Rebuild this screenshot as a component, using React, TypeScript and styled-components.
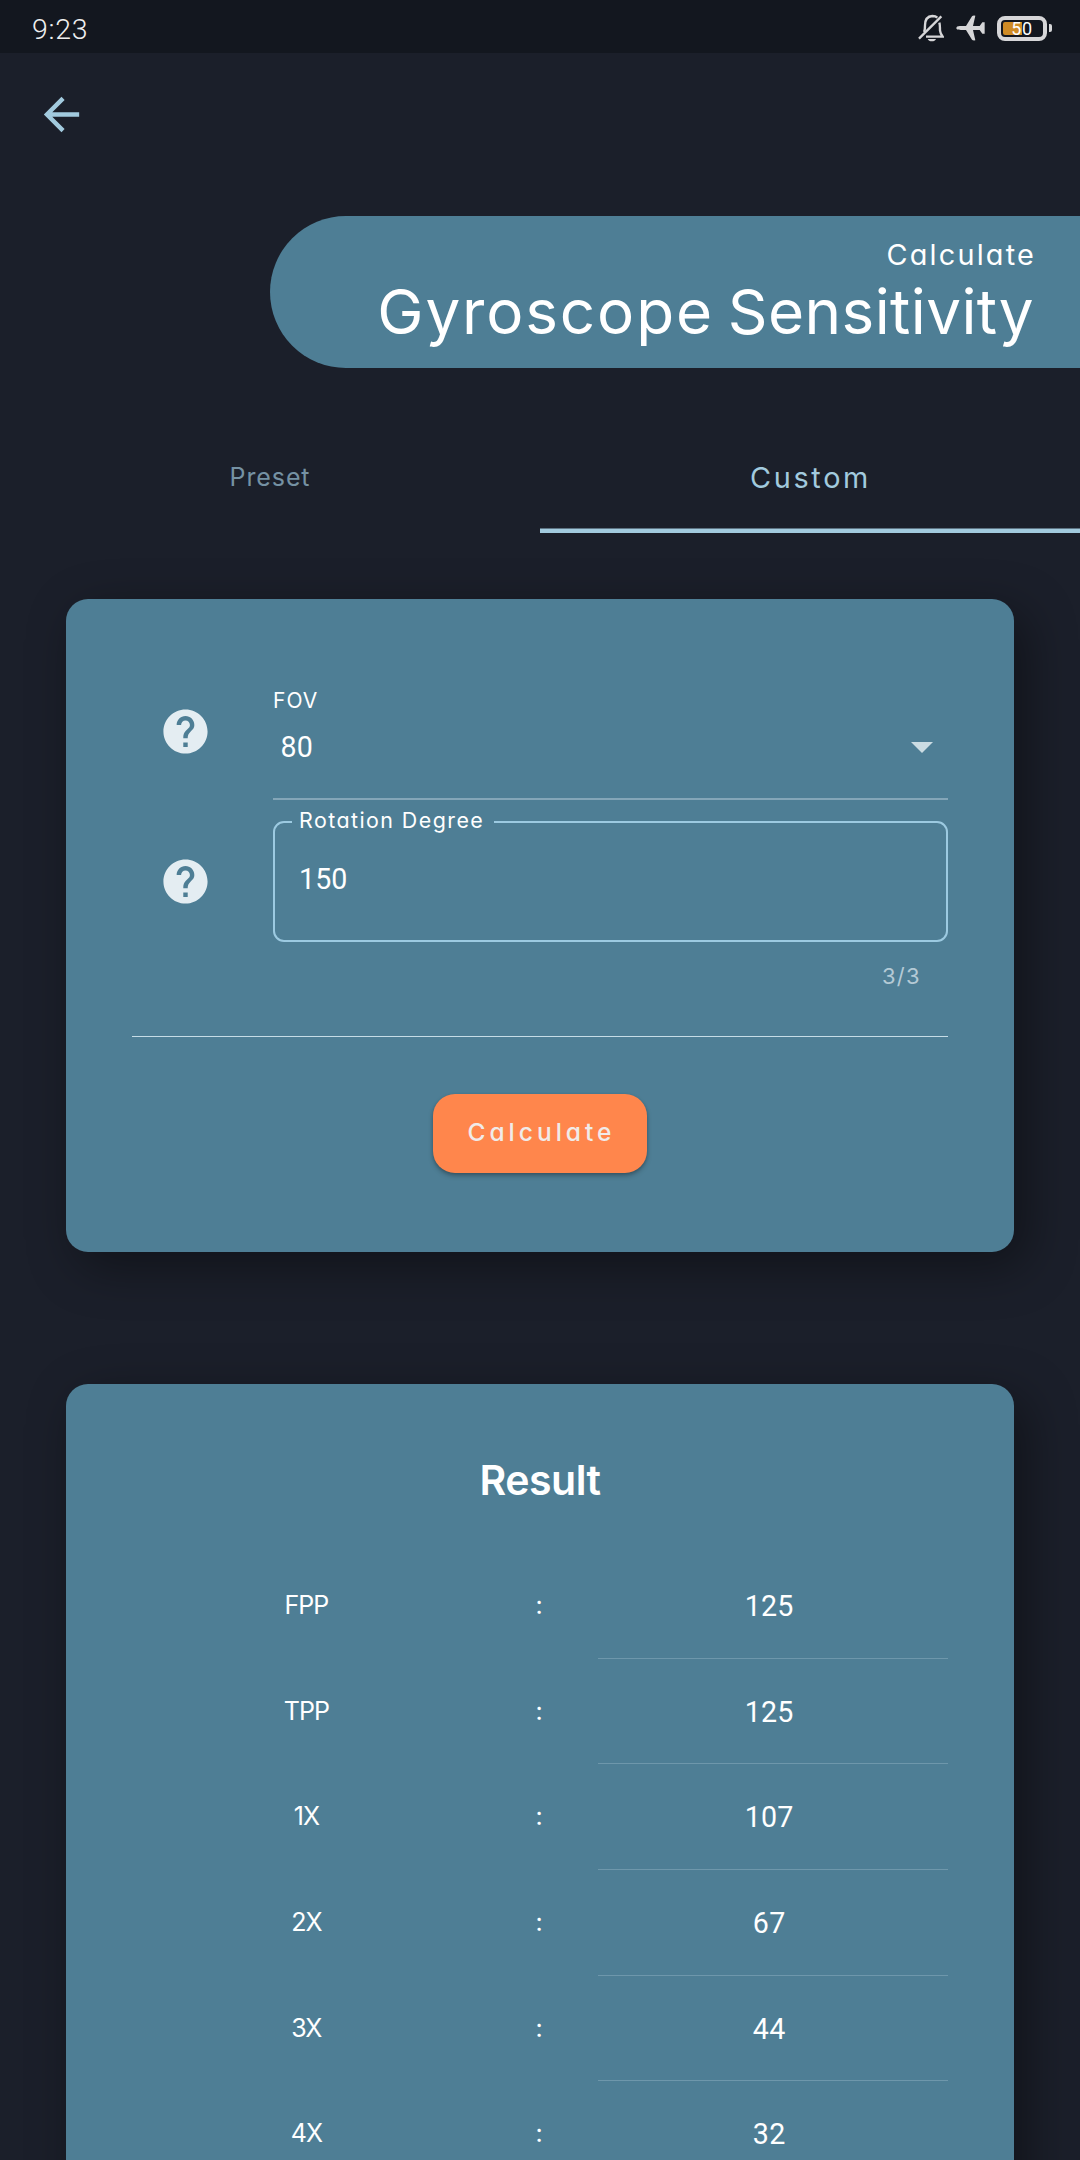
import React from 'react';
import styled, { createGlobalStyle, css } from 'styled-components';

const colors = {
  page: '#1b1f2a',
  status: '#13171f',
  surface: '#4e7e95',
  accent: '#a2cade',
  orange: '#ff864c',
};

const GlobalStyle = createGlobalStyle`
  *, *::before, *::after { box-sizing: border-box; }
  html, body { margin: 0; padding: 0; background: ${colors.page}; }
  body { height: 2160px; overflow: hidden; }
`;

const geometric = css`
  font-family: Inter, 'Open Sans', sans-serif;
  font-feature-settings: 'cv11' 1, 'calt' 0;
`;

const numeric = css`
  font-family: Roboto, 'Noto Sans', sans-serif;
`;

const Screen = styled.div`
  width: 1080px;
  height: 2160px;
  overflow: hidden;
  display: flex;
  flex-direction: column;
  background: ${colors.page};
  color: #fff;
  ${geometric}
`;

const StatusBar = styled.header`
  flex: none;
  height: 53px;
  padding: 3px 28px 0 32px;
  display: flex;
  align-items: center;
  justify-content: space-between;
  background: ${colors.status};
  color: #efefef;
`;

const Clock = styled.span`
  ${numeric}
  font-size: 28.5px;
  font-weight: 300;
  line-height: 50px;
  letter-spacing: 0.7px;
  padding-top: 3px;
`;

const StatusIcons = styled.div`
  display: flex;
  align-items: center;
  gap: 12px;
  height: 50px;
`;

const Battery = styled.div`
  display: flex;
  align-items: center;
  gap: 2px;

  &::after {
    content: '';
    width: 3px;
    height: 8px;
    border-radius: 0 2px 2px 0;
    background: #d6d6d8;
  }
`;

const BatteryShell = styled.div`
  width: 50px;
  height: 25px;
  padding: 2px;
  border: 4px solid #d6d6d8;
  border-radius: 8px;
`;

const BatteryLevel = styled.div`
  ${numeric}
  height: 13px;
  border-radius: 2px;
  background: linear-gradient(90deg, #cf8b25 50%, transparent 50%);
  color: #fff;
  font-size: 18px;
  line-height: 13px;
  letter-spacing: 0.6px;
  text-align: center;
`;

const AppBar = styled.nav`
  flex: none;
  height: 163px;
  padding: 35px 0 0 35px;
`;

const BackButton = styled.button`
  display: block;
  width: 53px;
  height: 53px;
  padding: 0;
  border: 0;
  background: none;
  color: ${colors.accent};
`;

const Banner = styled.section`
  flex: none;
  align-self: flex-end;
  width: 810px;
  height: 151.5px;
  padding: 21px 46px 0 0;
  border-radius: 76px 0 0 76px;
  background: ${colors.surface};
  text-align: right;
`;

const Overline = styled.div`
  font-size: 28.8px;
  line-height: 36px;
  letter-spacing: 2.2px;
  margin-right: -2px;
`;

const Title = styled.h1`
  margin: 0;
  font-size: 62px;
  font-weight: 400;
  line-height: 78px;
  letter-spacing: 0.4px;
  word-spacing: -4px;
  white-space: nowrap;
`;

const LooseWord = styled.span`
  letter-spacing: 1.85px;
`;

const Tabs = styled.div`
  flex: none;
  margin-top: 54px;
  height: 111.3px;
  display: grid;
  grid-template-columns: 1fr 1fr;
`;

const Tab = styled.button<{ $active?: boolean }>`
  ${geometric}
  border: 0;
  padding: ${(p) => (p.$active ? '1px 0 0 1px' : '0')};
  background: none;
  color: ${(p) => (p.$active ? colors.accent : '#7591a3')};
  font-size: ${(p) => (p.$active ? 28.8 : 25)}px;
  letter-spacing: ${(p) => (p.$active ? 2.7 : 0.9)}px;
  box-shadow: ${(p) => (p.$active ? `inset 0 -4.5px 0 ${colors.accent}` : 'none')};
`;

const Card = styled.section`
  flex: none;
  margin: 66px 66px 0;
  padding: 66px;
  border-radius: 22px;
  background: ${colors.surface};
  box-shadow: 12px 14px 50px rgba(0, 0, 0, 0.4);
`;

const FormCard = styled(Card)`
  height: 653.5px;
`;

const ResultCard = styled(Card)`
  margin-top: 132px;
  height: 900px;
`;

const FieldRow = styled.div<{ $gap?: number }>`
  display: grid;
  grid-template-columns: 106px 675px;
  justify-content: space-between;
  align-items: center;
  margin-top: ${(p) => p.$gap ?? 0}px;
`;

const HelpButton = styled.button<{ $lift?: number }>`
  display: flex;
  justify-content: center;
  padding: 0 0 ${(p) => p.$lift ?? 0}px 0;
  border: 0;
  background: none;
  color: #e4edf2;
`;

const SelectField = styled.div`
  height: 135px;
  padding-top: 22px;
  border-bottom: 2px solid #84a6b8;
`;

const FieldLabel = styled.div`
  font-size: 21px;
  line-height: 28px;
  letter-spacing: 1px;
`;

const SelectValue = styled.div`
  ${numeric}
  display: flex;
  align-items: center;
  justify-content: space-between;
  height: 64px;
  padding: 0 15px 0 7.5px;
  font-size: 28.6px;
  letter-spacing: 0.2px;

  svg {
    margin-top: 1px;
  }
`;

const OutlinedField = styled.div`
  ${numeric}
  position: relative;
  height: 121px;
  padding-left: 24px;
  border: 2px solid #9ccae1;
  border-radius: 11px;
  font-size: 28.6px;
  letter-spacing: 0.1px;
  line-height: 113px;
`;

const FloatingLabel = styled.span`
  ${geometric}
  position: absolute;
  left: 17px;
  top: -17px;
  width: 202px;
  padding-left: 7px;
  background: ${colors.surface};
  font-size: 21.4px;
  letter-spacing: 1.45px;
  line-height: 28px;
  white-space: nowrap;
`;

const Counter = styled.div`
  padding: 20px 27px 0 0;
  font-size: 22px;
  line-height: 28px;
  letter-spacing: 1.3px;
  text-align: right;
  color: #b4cad5;
`;

const Divider = styled.hr`
  margin: 46px 0 0;
  border: 0;
  height: 1px;
  background: #c6dce6;
`;

const CalculateButton = styled.button`
  ${geometric}
  display: block;
  width: 214px;
  height: 79px;
  margin: 57px auto 0;
  padding: 0 0 2px 3px;
  border: 0;
  border-radius: 22px;
  background: ${colors.orange};
  color: #f0ebe9;
  font-size: 24.5px;
  font-weight: 500;
  letter-spacing: 4px;
  box-shadow: 0 3px 5px rgba(0, 0, 0, 0.25), 0 1px 3px rgba(0, 0, 0, 0.15);
`;

const ResultTitle = styled.h2`
  margin: 0;
  font-size: 41px;
  font-weight: 600;
  line-height: 60px;
  letter-spacing: -0.5px;
  text-align: center;
`;

const ResultList = styled.div`
  margin-top: 42px;
`;

const ResultRow = styled.div`
  display: grid;
  grid-template-columns: 3fr 1fr 3fr;
  height: 105.6px;
  text-align: center;
  font-size: 25px;
  line-height: 106px;
`;

const Scope = styled.span`
  padding-right: 1px;
  letter-spacing: -1px;
`;

const Separator = styled.span`
  padding-right: 2px;
`;

const ResultValue = styled.span`
  ${numeric}
  height: 106.6px;
  border-bottom: 1px solid #6e97ab;
  padding-right: 8px;
  font-size: 28.6px;
  letter-spacing: 0.2px;
  line-height: 108px;
`;

const rows = [
  { scope: 'FPP', value: 125 },
  { scope: 'TPP', value: 125 },
  { scope: '1X', value: 107 },
  { scope: '2X', value: 67 },
  { scope: '3X', value: 44 },
  { scope: '4X', value: 32 },
];

const MutedBell = () => (
  <svg width="26" height="28" viewBox="0 0 78 84" fill="none" stroke="#d6d6d8" strokeWidth="7">
    <path d="M18 54 C21 49 21 44 21 34 C21 17 28 7 43 6 C50 6 55 8 58 11" />
    <path d="M64 26 C66 32 66 40 66 50 C67 58 70 62 74 68 L24 68" />
    <path d="M3 74 L70 7" />
    <path d="M29 75 H54 C52 80 48 82 41.500 82 C35 82 31 80 29 75 Z" fill="#d6d6d8" stroke="none" />
  </svg>
);

const Airplane = () => (
  <svg width="29" height="26" viewBox="0 0 87 78" fill="#d6d6d8">
    <path d="M3 35 C6 33 12 33 30 33 L48 4 Q50 1 58 2 L51 33 L71 33 L79 22 H86 V56 H79 L71 45 L51 45 L58 76 Q50 77 48 74 L30 45 C12 45 6 45 3 43 Q-1 39 3 35 Z" />
  </svg>
);

const HelpIcon = () => (
  <svg width="53" height="53" viewBox="0 0 24 24" fill="currentColor">
    <path d="M12 2C6.480 2 2 6.480 2 12s4.480 10 10 10 10-4.480 10-10S17.520 2 12 2zm1 17h-2v-2h2v2zm2.070-7.750l-.9.920C13.450 12.900 13 13.500 13 15h-2v-.5c0-1.100.450-2.100 1.170-2.830l1.240-1.260c.370-.360.590-.860.590-1.410 0-1.100-.9-2-2-2s-2 .9-2 2H8c0-2.210 1.790-4 4-4s4 1.790 4 4c0 .880-.360 1.680-.930 2.250z" />
  </svg>
);

export default function App() {
  return (
    <Screen>
      <GlobalStyle />
      <StatusBar>
        <Clock>9:23</Clock>
        <StatusIcons>
          <MutedBell />
          <Airplane />
          <Battery>
            <BatteryShell>
              <BatteryLevel>50</BatteryLevel>
            </BatteryShell>
          </Battery>
        </StatusIcons>
      </StatusBar>
      <AppBar>
        <BackButton aria-label="Back">
          <svg width="53" height="53" viewBox="0 0 24 24" fill="currentColor">
            <path d="M20 11H7.830l5.590-5.590L12 4l-8 8 8 8 1.410-1.410L7.830 13H20v-2z" />
          </svg>
        </BackButton>
      </AppBar>
      <Banner>
        <Overline>Calculate</Overline>
        <Title>
          <LooseWord>Gyroscope</LooseWord> Sensitivity
        </Title>
      </Banner>
      <Tabs>
        <Tab>Preset</Tab>
        <Tab $active>Custom</Tab>
      </Tabs>
      <FormCard>
        <FieldRow>
          <HelpButton aria-label="FOV help" $lift={2}>
            <HelpIcon />
          </HelpButton>
          <SelectField>
            <FieldLabel>FOV</FieldLabel>
            <SelectValue>
              80
              <svg width="22" height="11" viewBox="0 0 22 11" fill="#cbdce3">
                <path d="M0 0H22L11 11Z" />
              </svg>
            </SelectValue>
          </SelectField>
        </FieldRow>
        <FieldRow $gap={21}>
          <HelpButton aria-label="Rotation degree help">
            <HelpIcon />
          </HelpButton>
          <OutlinedField>
            <FloatingLabel>Rotation Degree</FloatingLabel>
            150
          </OutlinedField>
        </FieldRow>
        <Counter>3/3</Counter>
        <Divider />
        <CalculateButton>Calculate</CalculateButton>
      </FormCard>
      <ResultCard>
        <ResultTitle>Result</ResultTitle>
        <ResultList>
          {rows.map((r) => (
            <ResultRow key={r.scope}>
              <Scope>{r.scope}</Scope>
              <Separator>:</Separator>
              <ResultValue>{r.value}</ResultValue>
            </ResultRow>
          ))}
        </ResultList>
      </ResultCard>
    </Screen>
  );
}
